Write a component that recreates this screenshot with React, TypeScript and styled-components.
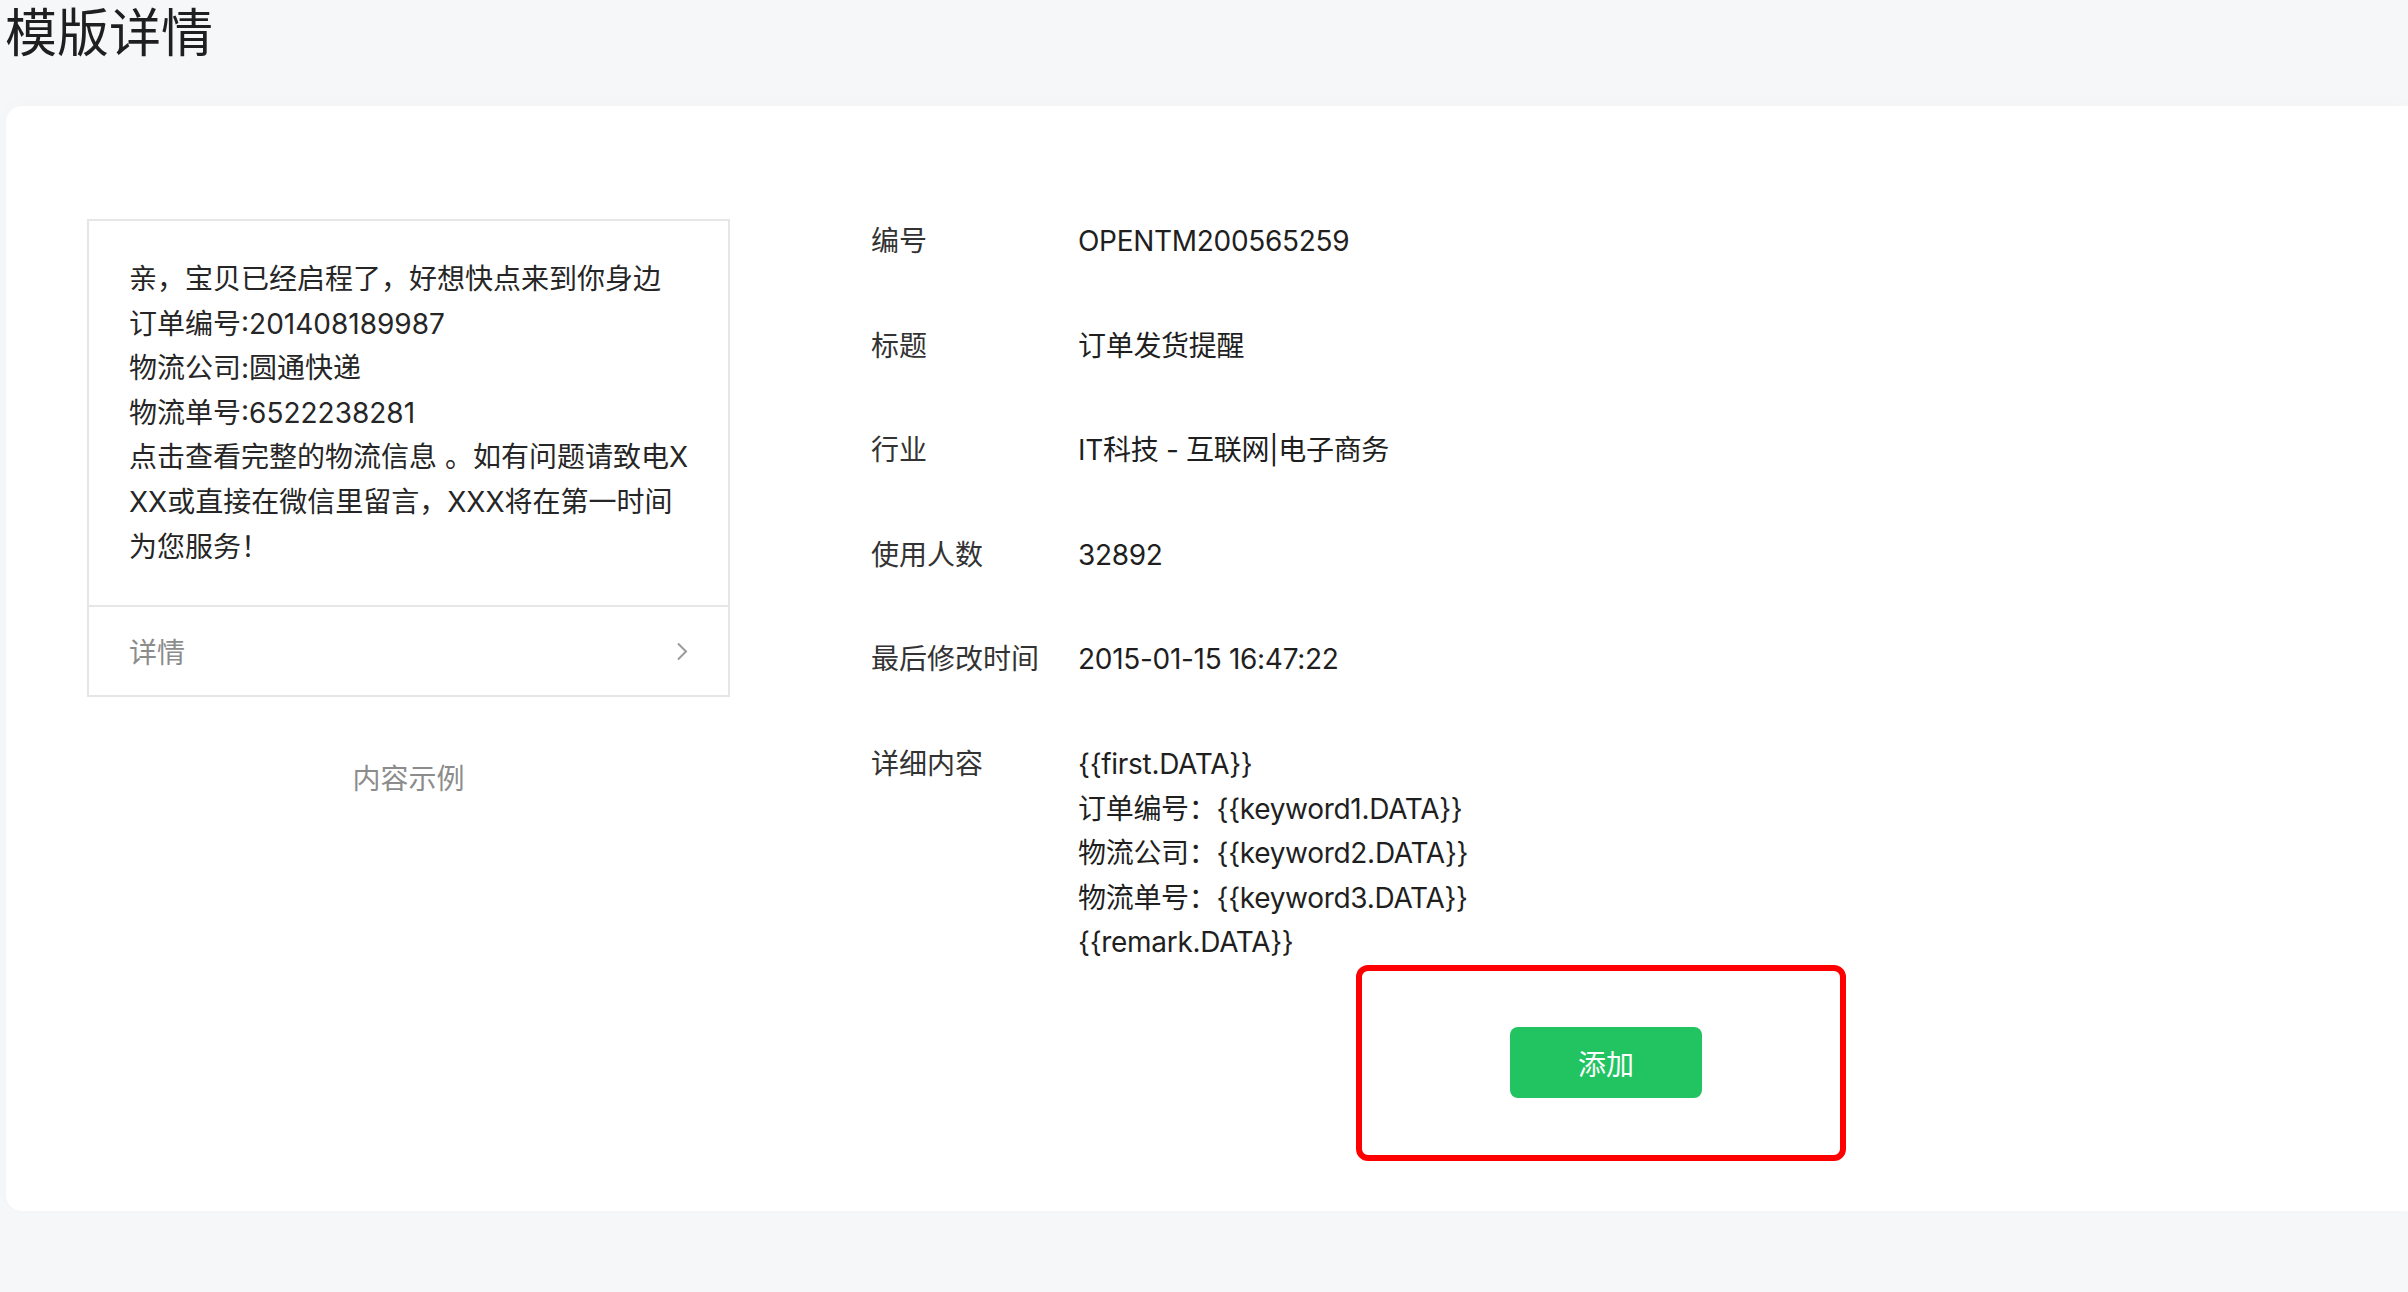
import React from 'react';
import styled, { createGlobalStyle } from 'styled-components';

const GlobalStyle = createGlobalStyle`
  html,
  body {
    margin: 0;
    padding: 0;
    background: #f6f7f9;
  }
  body {
    font-family: Inter, 'Noto Sans CJK SC', sans-serif;
    color: #222;
  }
`;

const Page = styled.div`
  min-height: 1292px;
  padding-left: 6px;
  box-sizing: border-box;
`;
const Title = styled.h1`
  margin: 0 0 0 -1px;
  padding-top: 4px;
  font-size: 52px;
  font-weight: 400;
  line-height: 60px;
  color: #1f1f1f;
`;
const Card = styled.section`
  margin-top: 42px;
  background: #fff;
  border-radius: 16px 0 0 16px;
  padding: 113px 0 50px 81px;
  display: flex;
  align-items: flex-start;
  gap: 141px;
  box-shadow: 0 -4px 20px rgba(0, 0, 0, 0.015);
`;

const PreviewColumn = styled.div`
  width: 643px;
  display: flex;
  flex-direction: column;
`;
const PreviewBox = styled.div`
  border: 2px solid #e6e6e6;
`;
const PreviewBody = styled.div`
  padding: 36px 40px 36px;
  font-size: 28px;
  line-height: 44.6px;
  color: #262626;
`;
const PreviewLine = styled.div`
  white-space: nowrap;
`;
const PreviewFooter = styled.div`
  height: 88px;
  border-top: 2px solid #e6e6e6;
  padding: 0 40px;
  display: flex;
  align-items: center;
  justify-content: space-between;
  font-size: 28px;
  color: #8c8c8c;
`;
const Caption = styled.div`
  margin-top: 60px;
  text-align: center;
  font-size: 28px;
  line-height: 44.6px;
  color: #8c8c8c;
`;

const InfoColumn = styled.div`
  display: flex;
  flex-direction: column;
`;
const InfoGrid = styled.dl`
  margin: 0;
  display: grid;
  grid-template-columns: 207px auto;
  row-gap: 60px;
  font-size: 28px;
  line-height: 44.6px;
`;
const Label = styled.dt`
  color: #333;
  white-space: nowrap;
`;
const Value = styled.dd`
  margin: 0;
  color: #1f1f1f;
  white-space: nowrap;
  letter-spacing: -0.3px;
`;
const Action = styled.div`
  margin-left: 485px;
  width: 490px;
  height: 196px;
  box-sizing: border-box;
  border: 6px solid #ff0000;
  border-radius: 12px;
  padding-left: 10px;
  display: flex;
  align-items: center;
  justify-content: center;
`;
const AddButton = styled.button`
  width: 192px;
  height: 71px;
  border: none;
  border-radius: 8px;
  background: #22c462;
  color: #fff;
  font-family: inherit;
  font-size: 28px;
  cursor: pointer;
`;

const Chevron = () => (
  <svg width="12" height="19" viewBox="0 0 12 19" fill="none">
    <polyline points="2,1.5 10,9.5 2,17.5" stroke="#9a9a9a" strokeWidth="2" />
  </svg>
);

const previewLines = [
  '亲，宝贝已经启程了，好想快点来到你身边',
  '订单编号:201408189987',
  '物流公司:圆通快递',
  '物流单号:6522238281',
  '点击查看完整的物流信息 。如有问题请致电X',
  'XX或直接在微信里留言，XXX将在第一时间',
  '为您服务！',
];

const info: [string, string][] = [
  ['编号', 'OPENTM200565259'],
  ['标题', '订单发货提醒'],
  ['行业', 'IT科技 - 互联网|电子商务'],
  ['使用人数', '32892'],
  ['最后修改时间', '2015-01-15 16:47:22'],
];

const detailLines = [
  '{{first.DATA}}',
  '订单编号：{{keyword1.DATA}}',
  '物流公司：{{keyword2.DATA}}',
  '物流单号：{{keyword3.DATA}}',
  '{{remark.DATA}}',
];

const App = () => {
  return (
    <Page>
      <GlobalStyle />
      <Title>模版详情</Title>
      <Card>
        <PreviewColumn>
          <PreviewBox>
            <PreviewBody>
              {previewLines.map((line) => (
                <PreviewLine key={line}>{line}</PreviewLine>
              ))}
            </PreviewBody>
            <PreviewFooter>
              <span>详情</span>
              <Chevron />
            </PreviewFooter>
          </PreviewBox>
          <Caption>内容示例</Caption>
        </PreviewColumn>
        <InfoColumn>
          <InfoGrid>
            {info.map(([label, value]) => (
              <React.Fragment key={label}>
                <Label>{label}</Label>
                <Value>{value}</Value>
              </React.Fragment>
            ))}
            <Label>详细内容</Label>
            <Value>
              {detailLines.map((line) => (
                <div key={line}>{line}</div>
              ))}
            </Value>
          </InfoGrid>
          <Action>
            <AddButton>添加</AddButton>
          </Action>
        </InfoColumn>
      </Card>
    </Page>
  );
};

export default App;
